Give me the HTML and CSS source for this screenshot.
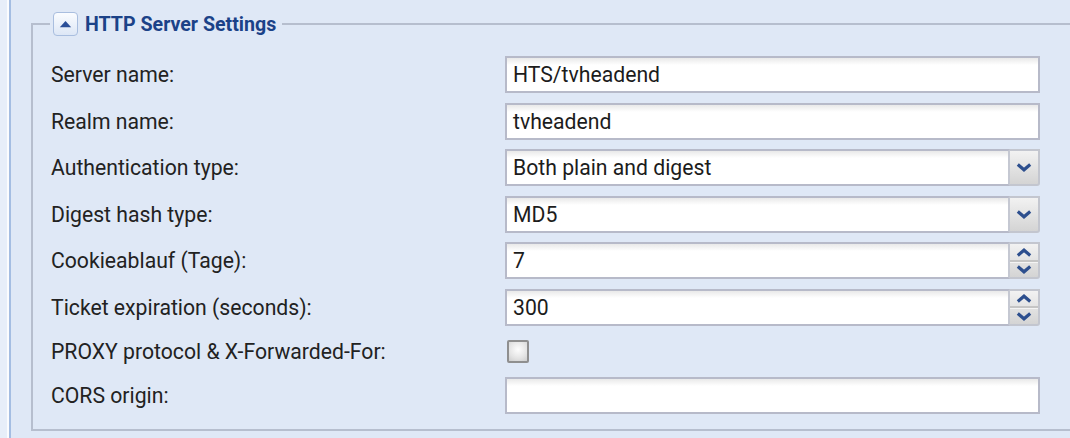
FILE: index.html
```html
<!DOCTYPE html>
<html>
<head>
<meta charset="utf-8">
<title>HTTP Server Settings</title>
<link rel="stylesheet" href="styles.css">
</head>
<body>
<div class="frame">
  <div class="frame-line">
    <div class="panel">
      <fieldset class="group">
        <legend class="group-title">
          <span class="toggle"><svg width="13" height="8" viewBox="0 0 13 8"><path d="M0.8 7.2 L6.5 1 L12.2 7.2 Z" fill="#2b4f98"/></svg></span>
          <span class="title-text">HTTP Server Settings</span>
        </legend>
        <div class="form">
          <div class="row">
            <div class="label">Server name:</div>
            <div class="field"><div class="text">HTS/tvheadend</div></div>
          </div>
          <div class="row">
            <div class="label">Realm name:</div>
            <div class="field"><div class="text">tvheadend</div></div>
          </div>
          <div class="row">
            <div class="label">Authentication type:</div>
            <div class="field combo">
              <div class="text">Both plain and digest</div>
              <div class="trigger"><svg width="16" height="9" viewBox="0 0 16 9"><path d="M1.8 1.6 L8 6.8 L14.2 1.6" fill="none" stroke="#2d4f8e" stroke-width="3.2"/></svg></div>
            </div>
          </div>
          <div class="row">
            <div class="label">Digest hash type:</div>
            <div class="field combo">
              <div class="text">MD5</div>
              <div class="trigger"><svg width="16" height="9" viewBox="0 0 16 9"><path d="M1.8 1.6 L8 6.8 L14.2 1.6" fill="none" stroke="#2d4f8e" stroke-width="3.2"/></svg></div>
            </div>
          </div>
          <div class="row">
            <div class="label">Cookieablauf (Tage):</div>
            <div class="field combo">
              <div class="text">7</div>
              <div class="trigger spin">
                <span class="spin-half"><svg width="16" height="9" viewBox="0 0 16 9"><path d="M1.8 7.4 L8 2.2 L14.2 7.4" fill="none" stroke="#2d4f8e" stroke-width="3.2"/></svg></span>
                <span class="spin-half spin-down"><svg width="16" height="9" viewBox="0 0 16 9"><path d="M1.8 1.6 L8 6.8 L14.2 1.6" fill="none" stroke="#2d4f8e" stroke-width="3.2"/></svg></span>
              </div>
            </div>
          </div>
          <div class="row">
            <div class="label">Ticket expiration (seconds):</div>
            <div class="field combo">
              <div class="text">300</div>
              <div class="trigger spin">
                <span class="spin-half"><svg width="16" height="9" viewBox="0 0 16 9"><path d="M1.8 7.4 L8 2.2 L14.2 7.4" fill="none" stroke="#2d4f8e" stroke-width="3.2"/></svg></span>
                <span class="spin-half spin-down"><svg width="16" height="9" viewBox="0 0 16 9"><path d="M1.8 1.6 L8 6.8 L14.2 1.6" fill="none" stroke="#2d4f8e" stroke-width="3.2"/></svg></span>
              </div>
            </div>
          </div>
          <div class="row row-check">
            <div class="label">PROXY protocol &amp; X-Forwarded-For:</div>
            <div class="field"><span class="checkbox"></span></div>
          </div>
          <div class="row">
            <div class="label">CORS origin:</div>
            <div class="field"><div class="text"></div></div>
          </div>
        </div>
      </fieldset>
    </div>
  </div>
</div>
</body>
</html>
```

FILE: styles.css
```css
* { box-sizing: border-box; }
html, body { margin: 0; height: 100%; }
body {
  background: #dfe8f6;
  font-family: Roboto, "Liberation Sans", sans-serif;
  color: #222;
  overflow: hidden;
}
.frame { height: 100%; padding-left: 7px; background: #e7eef9; }
.frame-line { height: 100%; border-left: 2px solid #fbfcfe; }
.panel {
  height: 100%;
  border-left: 2px solid #a4bde2;
  background: #dfe8f6;
  padding-left: 20px;
  overflow: hidden;
}
.group {
  margin: 12px -80px 0 0;
  border: 2px solid #b6bece;
  padding: 20px 0 15px 18px;
  min-width: 0;
}
.group-title {
  display: flex;
  align-items: center;
  gap: 7px;
  padding: 0 6px 0 3px;
  margin-left: -1px;
}
.toggle {
  width: 25px;
  height: 24px;
  border: 1px solid #a9bedf;
  border-radius: 4px;
  background: linear-gradient(#fafcff, #dde7f6);
  display: flex;
  align-items: center;
  justify-content: center;
}
.title-text {
  font-size: 19.6px;
  font-weight: bold;
  color: #1b4288;
}
.form { display: flex; flex-direction: column; gap: 9.6px; }
.row { display: flex; align-items: center; height: 37px; }
.row-check { height: 31.8px; }
.label { width: 454px; font-size: 21.2px; color: #222; }
.field { width: 535px; height: 100%; display: flex; align-items: center; }
.text {
  flex: 1;
  height: 37px;
  border: 2px solid #b7bac9;
  background: linear-gradient(#e9e9e9 0, #ffffff 7px);
  padding: 0 6px;
  display: flex;
  align-items: center;
  font-size: 21.2px;
  color: #1c1c1c;
}
.combo .text { border-right: 2px solid #c5c8d2; }
.trigger {
  width: 30px;
  height: 37px;
  border: 2px solid #c3c6cf;
  border-left: none;
  border-radius: 0 0 3px 0;
  background: linear-gradient(#f2f2f2, #d4d4d4);
  display: flex;
  align-items: center;
  justify-content: center;
}
.spin { flex-direction: column; }
.spin-half {
  flex: 1;
  width: 100%;
  display: flex;
  align-items: center;
  justify-content: center;
}
.spin-down {
  border-top: 2px solid #c5c5c5;
  box-shadow: inset 0 1px 0 #f4f4f4;
}
.checkbox {
  width: 22px;
  height: 23px;
  margin-left: 2px;
  border: 2px solid #8f8f8f;
  border-radius: 2px;
  background: radial-gradient(circle at 50% 40%, #fdfdfd 0, #e4e4e4 60%, #cdcdcd 100%);
}
```
